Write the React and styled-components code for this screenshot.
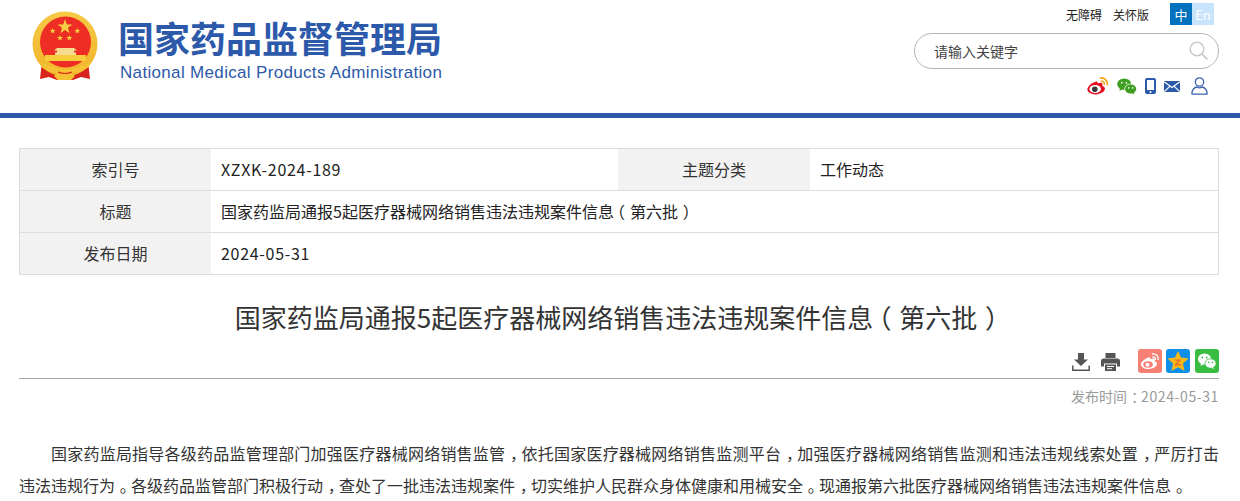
import React from 'react';
import styled, { createGlobalStyle } from 'styled-components';

const cjk = `"Noto Sans CJK SC", "Microsoft YaHei", sans-serif`;

const GlobalStyle = createGlobalStyle`
  html, body {
    margin: 0;
    padding: 0;
    background: #fff;
    font-family: ${cjk};
    color: #333;
    overflow: hidden;
  }
`;

const Page = styled.div`
  width: 1240px;
  height: 501px;
  overflow: hidden;
`;

const Header = styled.header`
  height: 113px;
  border-bottom: 5px solid #2c59a9;
  display: flex;
  justify-content: space-between;
  padding: 0 21px 0 32px;
`;

const Brand = styled.div`
  display: flex;
  align-items: flex-start;
  gap: 20px;
  padding-top: 11px;
`;

const BrandText = styled.div`
  display: flex;
  flex-direction: column;
  color: #2c59a9;
`;

const BrandName = styled.div`
  font-size: 36px;
  font-weight: 700;
  line-height: 52px;
  white-space: nowrap;
`;

const BrandEnglish = styled.div`
  font-family: "Liberation Sans", Arial, sans-serif;
  font-size: 17px;
  line-height: 20px;
  letter-spacing: 0.33px;
  margin-left: 2px;
  white-space: nowrap;
`;

const Tools = styled.div`
  width: 306px;
  display: flex;
  flex-direction: column;
  align-items: flex-end;
  padding-top: 3px;
`;

const TopLinks = styled.div`
  display: flex;
  align-items: center;
  margin-right: 5px;
  height: 22px;
  font-size: 12px;
  color: #222;
`;

const TopLink = styled.span`
  margin-right: 11px;
`;

const LangGroup = styled.div`
  display: flex;
  margin-left: 10px;
`;

const Lang = styled.span`
  width: 22px;
  height: 22px;
  display: grid;
  place-items: center;
  font-size: 13px;
  color: #fff;
  background: ${(p) => (p.$active ? '#0071bc' : '#c8e4fd')};
`;

const Search = styled.div`
  box-sizing: border-box;
  width: 305px;
  height: 36px;
  margin-top: 8px;
  border: 1px solid #b5b5b5;
  border-radius: 18px;
  display: flex;
  align-items: center;
  justify-content: space-between;
  padding: 0 9px 0 19px;
  font-size: 14px;
  color: #444;
`;

const IconRow = styled.div`
  display: flex;
  align-items: center;
  margin: 7px 11px 0 0;
  height: 20px;
`;

const IconSlot = styled.span`
  display: flex;
  margin-left: ${(p) => p.$gap || 0}px;
`;

const Main = styled.main`
  padding: 30px 21px 0 19px;
`;

const InfoTable = styled.div`
  border: 1px solid #dcdcdc;
  display: grid;
  grid-template-columns: 191px 407px 192px 1fr;
  font-size: 16px;
  color: #333;
`;

const Cell = styled.div`
  height: 39px;
  padding-bottom: 2px;
  display: flex;
  align-items: center;
  border-bottom: ${(p) => (p.$last ? 'none' : '1px solid #dcdcdc')};
  grid-column: ${(p) => p.$span || 'auto'};
`;

const LabelCell = styled(Cell)`
  background: #f2f2f2;
  justify-content: center;
`;

const ValueCell = styled(Cell)`
  padding-left: 10px;
  color: #222;
  white-space: nowrap;
`;

const Latin = styled.span`
  letter-spacing: ${(p) => p.$spacing || 0.7}px;
`;

// punctuation sits in the middle of its em box in the reference
const Punct = styled.span`
  display: inline-block;
  width: 1em;
  text-indent: 0;
  transform: translateX(${(p) => p.$shift}em);
`;

const Title = styled.h1`
  margin: 20px 0 0;
  height: 44px;
  line-height: 44px;
  font-size: 26px;
  font-weight: 400;
  text-align: center;
  color: #333;
  white-space: nowrap;
`;

const ShareBar = styled.div`
  margin-top: 10px;
  height: 29px;
  border-bottom: 1px solid #a9a9a9;
  display: flex;
  justify-content: flex-end;
  align-items: flex-start;
`;

const ActionIcon = styled.span`
  display: flex;
  margin-right: ${(p) => p.$gap}px;
  padding-top: 4px;
`;

const ShareTile = styled.span`
  width: 24px;
  height: 24px;
  border-radius: 3px;
  display: block;
  margin-left: ${(p) => p.$gap ?? 4}px;
  overflow: hidden;
  background: ${(p) => p.$bg};
`;

const Published = styled.div`
  margin-top: 7px;
  text-align: right;
  font-size: 14px;
  line-height: 20px;
  color: #999;
`;

const Article = styled.article`
  margin-top: 31px;
  font-size: 16px;
  line-height: 32px;
  color: #333;
`;

const FullLine = styled.div`
  text-indent: 32px;
  text-align: justify;
  text-align-last: justify;
  white-space: normal;
`;

const LastLine = styled.div`
  white-space: nowrap;
`;

const shifts = { '，': 0.3, '。': 0.3, '：': 0.3, '（': -0.3, '）': 0.3 };

// wraps the fullwidth punctuation of a string so that it can be centred
const Zh = ({ children }) =>
  children.split(/([，。：（）])/).map((part, i) =>
    shifts[part] ? (
      <Punct key={i} $shift={shifts[part]}>{part}</Punct>
    ) : (
      part
    )
  );

const Emblem = () => (
  <svg width="66" height="70" viewBox="0 0 66 70">
    <defs>
      <linearGradient id="gold" x1="0" y1="0" x2="0" y2="1">
        <stop offset="0" stopColor="#f6c945" />
        <stop offset="1" stopColor="#f0b429" />
      </linearGradient>
    </defs>
    <path d="M10 50 L8 68 L17 66 L25 69 L41 69 L49 66 L58 68 L56 50z" fill="#d9231d" />
    <circle cx="33" cy="33" r="32.500" fill="url(#gold)" />
    <circle cx="33.500" cy="31" r="25.500" fill="#ee2e24" />
    <polygon points="33,8 34.800,13.400 40.500,13.400 35.900,16.800 37.600,22.200 33,18.900 28.400,22.200 30.100,16.800 25.500,13.400 31.200,13.400" fill="#f9cf43" />
    <polygon points="20.700,17 21.500,19.100 23.700,19.100 21.900,20.500 22.600,22.600 20.700,21.300 18.800,22.600 19.500,20.500 17.700,19.100 19.900,19.100" fill="#f9cf43" />
    <polygon points="45.300,17 46.100,19.100 48.300,19.100 46.500,20.500 47.200,22.600 45.300,21.300 43.400,22.600 44.100,20.500 42.300,19.100 44.500,19.100" fill="#f9cf43" />
    <polygon points="28,24 28.800,26.100 31,26.100 29.200,27.500 29.900,29.600 28,28.300 26.100,29.600 26.800,27.500 25,26.100 27.200,26.100" fill="#f9cf43" />
    <polygon points="37.300,24 38.100,26.100 40.300,26.100 38.500,27.500 39.200,29.600 37.300,28.300 35.400,29.600 36.100,27.500 34.300,26.100 36.500,26.100" fill="#f9cf43" />
    <path d="M25 37 h17 l3 2.500 h-3 v2 h2 v2.500 h-21 v-2.500 h2 v-2 h-3z" fill="#f6dc8e" />
    <rect x="13" y="44" width="41" height="6" fill="#f8cd3c" />
    <path d="M9 51 q24 14 49 0 l-1 5 q-12 7 -17 6 l3 3 -4 4 h-13 l-4 -4 3 -3 q-7 0 -16 -6z" fill="#f5c234" />
    <path d="M26 61 q7 3 14 0" fill="none" stroke="#d9231d" strokeWidth="1.200" />
  </svg>
);

const WeiboIcon = () => (
  <svg width="22" height="18" viewBox="0 0 22 18">
    <path d="M9.200 4.600C5.300 5.500.4 9.300.4 12.600c0 2.900 4 4.800 8.200 4.800 5.200 0 9.300-2.900 9.300-5.600 0-1.700-1.600-2.400-2.700-2.700.5-1.200.5-2.500-.5-3.100-1.200-.7-3 0-4 .5.2-1.300-.4-2.600-1.500-1.900z" fill="#e60e1e" />
    <ellipse cx="8.200" cy="12" rx="5.800" ry="4" fill="#fff" />
    <circle cx="7.800" cy="12.200" r="2.800" fill="#3a3a3a" />
    <path d="M13.500 1.200c3.500-.9 7.200 1.800 6.800 6.500" fill="none" stroke="#f5a623" strokeWidth="1.800" strokeLinecap="round" />
    <path d="M14.300 4.300c1.800-.4 3.400 1 3 3" fill="none" stroke="#f5a623" strokeWidth="1.500" strokeLinecap="round" />
  </svg>
);

const WechatIcon = () => (
  <svg width="20" height="17" viewBox="0 0 20 17">
    <ellipse cx="7.200" cy="6.200" rx="7" ry="5.800" fill="#3f9f22" />
    <path d="M3 10l-.6 3 3-1.800z" fill="#3f9f22" />
    <ellipse cx="13.600" cy="11" rx="6" ry="5" fill="#3f9f22" stroke="#fff" strokeWidth="0.800" />
    <path d="M16.500 14.500l1 2-2.600-1.200z" fill="#3f9f22" />
    <circle cx="4.800" cy="4.800" r="0.900" fill="#fff" />
    <circle cx="9.400" cy="4.800" r="0.900" fill="#fff" />
    <circle cx="11.700" cy="9.900" r="0.800" fill="#fff" />
    <circle cx="15.600" cy="9.900" r="0.800" fill="#fff" />
  </svg>
);

const PhoneIcon = () => (
  <svg width="11" height="16" viewBox="0 0 11 16">
    <rect x="0" y="0" width="11" height="16" rx="2" fill="#2c59a9" />
    <rect x="2" y="2" width="7" height="10" fill="#fff" />
    <circle cx="5.500" cy="14" r="1" fill="#fff" />
  </svg>
);

const MailIcon = () => (
  <svg width="16" height="11" viewBox="0 0 16 11">
    <rect width="16" height="11" rx="1" fill="#2c59a9" />
    <path d="M0.500 1l7.500 5.500L15.500 1M0.500 10.500L6 5.200M15.500 10.500L10 5.200" fill="none" stroke="#fff" strokeWidth="1.100" />
  </svg>
);

const UserIcon = () => (
  <svg width="17" height="18" viewBox="0 0 17 18">
    <circle cx="8.500" cy="5" r="4.200" fill="none" stroke="#3d64ad" strokeWidth="1.300" />
    <path d="M1 17.200c-.5-4 2.500-6.800 4.500-7.200 1.800 1 4.200 1 6 0 2 .4 5 3.200 4.500 7.200z" fill="none" stroke="#3d64ad" strokeWidth="1.300" strokeLinejoin="round" />
  </svg>
);

const SearchIcon = () => (
  <svg width="20" height="20" viewBox="0 0 20 20">
    <circle cx="8" cy="8" r="6.800" fill="none" stroke="#c4c4c4" strokeWidth="1.300" />
    <path d="M12.800 13l5.600 5.400" stroke="#c4c4c4" strokeWidth="1.600" />
  </svg>
);

const DownloadIcon = () => (
  <svg width="18" height="18" viewBox="0 0 18 18">
    <path d="M6 0h6v6.500h4l-7 6.500-7-6.500h4z" fill="#555" />
    <path d="M.8 12.500v4.700h16.400v-4.700" fill="none" stroke="#555" strokeWidth="1.500" />
  </svg>
);

const PrintIcon = () => (
  <svg width="19" height="18" viewBox="0 0 19 18">
    <path d="M4.500 0h10v5h-10z" fill="#555" />
    <path d="M2.500 5.500h14a2.500 2.500 0 0 1 2.500 2.500v5.500h-3v-3H3v3H0V8a2.500 2.500 0 0 1 2.500-2.500z" fill="#555" />
    <path d="M4 11.500h11V18H4z" fill="#555" />
    <path d="M6 13.500h7M6 15.700h5" stroke="#fff" strokeWidth="1" />
  </svg>
);

const WeiboTile = () => (
  <ShareTile $bg="#f77f74" $gap={0}>
    <svg width="24" height="24" viewBox="0 0 24 24">
      <path d="M10 8.500C6.500 10 3 13 3 15.500c0 2.500 3.500 4.500 7.500 4.500 5 0 8.500-3 8.500-5.200 0-1.500-1.300-2-2.300-2.300.5-1.200.3-2.300-.6-2.700-1-.5-2.700.1-3.600.6.200-1.300-1-2.600-2.500-1.900z" fill="#fff" />
      <ellipse cx="10" cy="15.500" rx="4.800" ry="3.200" fill="#f77f74" />
      <circle cx="9.500" cy="15.700" r="2" fill="#fff" />
      <path d="M14.500 5c3.500-.6 6.300 2 5.700 5.500M15 8c1.500-.3 2.700 1 2.400 2.400" fill="none" stroke="#fff" strokeWidth="1.400" strokeLinecap="round" />
    </svg>
  </ShareTile>
);

const QzoneTile = () => (
  <ShareTile $bg="#0f8fe8">
    <svg width="24" height="24" viewBox="0 0 24 24">
      <polygon points="12,2 15,8.600 22.500,9.500 17,14.500 18.500,22 12,18.300 5.500,22 7,14.500 1.500,9.500 9,8.600" fill="#fbb916" />
      <path d="M8.500 10.500h7l-4.300 4.800h4.300l.5 1.200H8l4-4.800H9z" fill="#e8732a" />
    </svg>
  </ShareTile>
);

const WechatTile = () => (
  <ShareTile $bg="#38bd42" $gap={5}>
    <svg width="24" height="24" viewBox="0 0 24 24">
      <ellipse cx="9.500" cy="10" rx="6.500" ry="5.500" fill="#fff" />
      <path d="M6 14l-.6 3 3.200-1.800z" fill="#fff" />
      <ellipse cx="15.500" cy="14.500" rx="5.600" ry="4.700" fill="#fff" stroke="#38bd42" strokeWidth="0.800" />
      <path d="M18 18l1 2-2.800-1.200z" fill="#fff" />
      <circle cx="7.300" cy="8.500" r="0.900" fill="#38bd42" />
      <circle cx="11.700" cy="8.500" r="0.900" fill="#38bd42" />
      <circle cx="13.600" cy="13.400" r="0.800" fill="#38bd42" />
      <circle cx="17.400" cy="13.400" r="0.800" fill="#38bd42" />
    </svg>
  </ShareTile>
);

const App = () => {
  const title = '国家药监局通报5起医疗器械网络销售违法违规案件信息（第六批）';
  return (
    <Page>
      <GlobalStyle />
      <Header>
        <Brand>
          <Emblem />
          <BrandText>
            <BrandName>国家药品监督管理局</BrandName>
            <BrandEnglish>National Medical Products Administration</BrandEnglish>
          </BrandText>
        </Brand>
        <Tools>
          <TopLinks>
            <TopLink>无障碍</TopLink>
            <TopLink>关怀版</TopLink>
            <LangGroup>
              <Lang $active>中</Lang>
              <Lang>En</Lang>
            </LangGroup>
          </TopLinks>
          <Search>
            <span>请输入关键字</span>
            <SearchIcon />
          </Search>
          <IconRow>
            <IconSlot><WeiboIcon /></IconSlot>
            <IconSlot $gap={8}><WechatIcon /></IconSlot>
            <IconSlot $gap={8}><PhoneIcon /></IconSlot>
            <IconSlot $gap={8}><MailIcon /></IconSlot>
            <IconSlot $gap={11}><UserIcon /></IconSlot>
          </IconRow>
        </Tools>
      </Header>
      <Main>
        <InfoTable>
          <LabelCell>索引号</LabelCell>
          <ValueCell><Latin>XZXK-2024-189</Latin></ValueCell>
          <LabelCell>主题分类</LabelCell>
          <ValueCell>工作动态</ValueCell>
          <LabelCell>标题</LabelCell>
          <ValueCell $span="span 3"><span><Zh>{title}</Zh></span></ValueCell>
          <LabelCell $last>发布日期</LabelCell>
          <ValueCell $last $span="span 3"><Latin>2024-05-31</Latin></ValueCell>
        </InfoTable>
        <Title><Zh>{title}</Zh></Title>
        <ShareBar>
          <ActionIcon $gap={11}><DownloadIcon /></ActionIcon>
          <ActionIcon $gap={18}><PrintIcon /></ActionIcon>
          <WeiboTile />
          <QzoneTile />
          <WechatTile />
        </ShareBar>
        <Published>
          <Zh>发布时间：</Zh>
          <Latin $spacing={0.6}>2024-05-31</Latin>
        </Published>
        <Article>
          <FullLine>
            <Zh>国家药监局指导各级药品监管理部门加强医疗器械网络销售监管，依托国家医疗器械网络销售监测平台，加强医疗器械网络销售监测和违法违规线索处置，严厉打击</Zh>
          </FullLine>
          <LastLine>
            <Zh>违法违规行为。各级药品监管部门积极行动，查处了一批违法违规案件，切实维护人民群众身体健康和用械安全。现通报第六批医疗器械网络销售违法违规案件信息。</Zh>
          </LastLine>
        </Article>
      </Main>
    </Page>
  );
};

export default App;
